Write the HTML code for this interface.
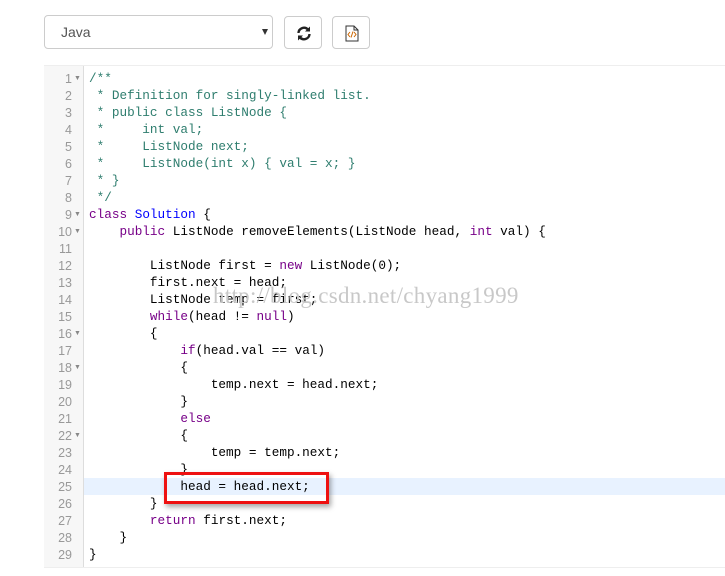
<!DOCTYPE html>
<html><head><meta charset="utf-8"><style>
body{margin:0;width:725px;height:576px;background:#fff;position:relative;overflow:hidden;font-family:"Liberation Sans",sans-serif}
.sel{position:absolute;left:44px;top:15px;width:229px;height:34px;border:1px solid #ccc;border-radius:4px;box-sizing:border-box}
.sel span{position:absolute;left:16px;top:8px;font-size:14px;color:#555}
.sel i{position:absolute;right:4px;top:13px;border-left:3.5px solid transparent;border-right:3.5px solid transparent;border-top:6px solid #333}
.btn{position:absolute;top:16px;width:38px;height:33px;border:1px solid #ccc;border-radius:4px;box-sizing:border-box}
.ed{position:absolute;left:44px;top:65px;width:690px;height:503px;border:1px solid #eee;box-sizing:border-box}
.gut{position:absolute;left:44px;top:66px;width:39px;height:501px;background:#f7f7f7;border-right:1px solid #ddd}
.ln{position:absolute;left:44px;width:28px;text-align:right;font-family:"Liberation Sans",sans-serif;font-size:12.5px;color:#999}
.cl{position:absolute;left:89px;font-family:"Liberation Mono",monospace;font-size:12.7px;white-space:pre;color:#000}
.f{position:absolute;left:74px;font-size:7px;color:#888}
.c{color:#2e7d6e}.k{color:#708}.d{color:#00f}
.hl{position:absolute;left:84px;top:478px;width:641px;height:17px;background:#e8f2ff}
.box{position:absolute;left:164px;top:472px;width:165px;height:32px;border:3px solid #e11;box-sizing:border-box;box-shadow:2px 3px 5px rgba(0,0,0,.35)}
.wm{position:absolute;left:213px;top:283px;font-family:"Liberation Serif",serif;font-size:23px;color:#c8c8c8;letter-spacing:.3px}
</style></head><body>
<div class="sel"><span>Java</span><i></i></div>
<div class="btn" style="left:284px"><svg width="38" height="33" viewBox="0 0 38 33"><path d="M13.5 16a5.5 5.5 0 0 1 9.5-3.5" stroke="#222" stroke-width="2.4" fill="none"/><path d="M25 9.5v5h-5z" fill="#222"/><path d="M24.5 17a5.5 5.5 0 0 1-9.5 3.5" stroke="#222" stroke-width="2.4" fill="none"/><path d="M13 23.5v-5h5z" fill="#222"/></svg></div>
<div class="btn" style="left:332px"><svg width="38" height="33" viewBox="0 0 38 33"><path d="M13 9h8l4 4v11H13z" fill="#fff" stroke="#333"/><path d="M21 9v4h4" fill="none" stroke="#333"/><path d="M17 15l-2 2.5 2 2.5M21 15l2 2.5-2 2.5M20 14.5l-2 6" stroke="#c60" fill="none"/></svg></div>
<div class="ed"></div><div class="gut"></div>
<div class="hl"></div>
<div id="code"></div>
<div class="wm">http://blog.csdn.net/chyang1999</div>
<div class="box"></div>
<script>
var L=[
'<span class="c">/**</span>',
'<span class="c"> * Definition for singly-linked list.</span>',
'<span class="c"> * public class ListNode {</span>',
'<span class="c"> *     int val;</span>',
'<span class="c"> *     ListNode next;</span>',
'<span class="c"> *     ListNode(int x) { val = x; }</span>',
'<span class="c"> * }</span>',
'<span class="c"> */</span>',
'<span class="k">class</span> <span class="d">Solution</span> {',
'    <span class="k">public</span> ListNode removeElements(ListNode head, <span class="k">int</span> val) {',
'',
'        ListNode first = <span class="k">new</span> ListNode(0);',
'        first.next = head;',
'        ListNode temp = first;',
'        <span class="k">while</span>(head != <span class="k">null</span>)',
'        {',
'            <span class="k">if</span>(head.val == val)',
'            {',
'                temp.next = head.next;',
'            }',
'            <span class="k">else</span>',
'            {',
'                temp = temp.next;',
'            }',
'            head = head.next;',
'        }',
'        <span class="k">return</span> first.next;',
'    }',
'}'];
var F=[1,9,10,16,18,22],h='';
for(var i=0;i<L.length;i++){var t=71+i*17;
h+='<div class="ln" style="top:'+(t+1)+'px">'+(i+1)+'</div><div class="cl" style="top:'+t+'px">'+L[i]+'</div>';
if(F.indexOf(i+1)>=0)h+='<div class="f" style="top:'+(t+4)+'px">&#9660;</div>';}
document.getElementById('code').innerHTML=h;
</script>
</body></html>
